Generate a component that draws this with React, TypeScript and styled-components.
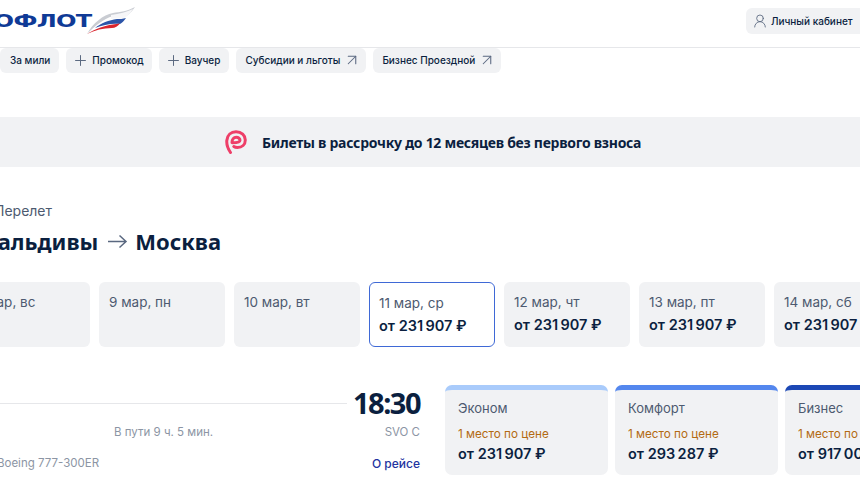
import React from 'react'
import styled, { createGlobalStyle } from 'styled-components'
import { ArrowUpRight, Plus, UserRound } from 'lucide-react'

const GlobalStyle = createGlobalStyle`
  html, body {
    margin: 0;
    padding: 0;
    background: #fff;
    font-family: Inter, "Liberation Sans", sans-serif;
    color: #0b1f3f;
  }
`

const Page = styled.div`
  width: 860px;
  height: 500px;
  overflow: hidden;
`

const Header = styled.header`
  height: 47px;
  border-bottom: 1px solid #e6e7ea;
  display: flex;
  align-items: center;
  justify-content: space-between;
`

const Logo = styled.div`
  display: flex;
  align-items: center;
  margin-left: -14px;
  margin-top: -5px;
`

const LogoText = styled.span`
  font-family: "DejaVu Sans", sans-serif;
  font-weight: 700;
  font-size: 17px;
  letter-spacing: -0.5px;
  color: #0f3a96;
  transform: scaleX(1.42);
  transform-origin: right center;
`

const Flag = styled.svg`
  width: 48px;
  height: 28px;
  margin-left: -5px;
  margin-top: -1px;
`

const CabinetButton = styled.button`
  width: 114px;
  height: 26px;
  margin-top: -5px;
  padding: 0 0 0 6px;
  display: flex;
  align-items: center;
  gap: 3px;
  border: none;
  border-radius: 6px 0 0 6px;
  background: #f1f2f4;
  font: 500 10px Inter, sans-serif;
  color: #0b1f3f;
  white-space: nowrap;
`

const ChipRow = styled.nav`
  display: flex;
  gap: 7px;
`

const Chip = styled.div<{ $left?: number; $right?: number }>`
  box-sizing: border-box;
  height: 25px;
  padding: 0 ${p => p.$right ?? 9}px 1px ${p => p.$left ?? 9}px;
  display: flex;
  align-items: center;
  gap: 3px;
  border-radius: 6px;
  background: #f1f2f4;
  font-size: 10px;
  font-weight: 500;
  color: #0b1f3f;
  white-space: nowrap;

  svg {
    color: #5a6880;
  }
`

const Banner = styled.div`
  height: 50px;
  margin-top: 44px;
  padding-left: 225px;
  display: flex;
  align-items: center;
  gap: 15px;
  background: #f1f2f4;
  font: 700 14px "Noto Sans", sans-serif;
  letter-spacing: -0.27px;
  color: #0b1f3f;
`

const Section = styled.section`
  margin-top: 35px;
  margin-left: -36px;
`

const Caption = styled.div`
  margin-left: 30px;
  font-size: 14px;
  line-height: 18px;
  color: #4d5a70;
`

const Route = styled.h1`
  height: 28px;
  margin: 7px 0 0 13px;
  display: flex;
  align-items: center;
  gap: 3px;
  font: 700 22px/28px "Noto Sans", sans-serif;
  color: #0b1f3f;
`

const RouteArrow = styled.svg`
  width: 31px;
  height: 30px;
  fill: none;
  stroke: #5a6880;
  stroke-width: 1.5;
`

const Dates = styled.div`
  margin-top: 27px;
  display: flex;
  gap: 9px;
`

const DateCard = styled.div<{ $active?: boolean }>`
  flex: 0 0 126px;
  box-sizing: border-box;
  height: 65px;
  padding: 12px 9px 0 ${p => (p.$active ? 9 : 10)}px;
  border-radius: 6px;
  background: ${p => (p.$active ? '#fff' : '#f1f2f4')};
  border: ${p => (p.$active ? '1px solid #3f69d6' : 'none')};
`

const DateLabel = styled.div`
  font-size: 13.5px;
  line-height: 16px;
  color: #4d5a70;
  white-space: nowrap;
`

const DatePrice = styled.div`
  margin-top: 6px;
  font-size: 14.5px;
  line-height: 17px;
  font-weight: 600;
  color: #0b1f3f;
  white-space: nowrap;
`

const FlightRow = styled.div`
  margin-top: 38px;
  margin-left: 36px;
  display: flex;
`

const FlightInfo = styled.div`
  width: 420px;
  flex: none;
  display: grid;
  grid-template-columns: 1fr auto;
`

const TrackLine = styled.div`
  height: 1px;
  margin: 18px 6px 0 0;
  background: #e6e7ea;
`

const ArrivalTime = styled.div`
  font: 700 29px/36px "Noto Sans", sans-serif;
  letter-spacing: -1.5px;
  color: #0b1f3f;
`

const Duration = styled.div`
  padding-left: 114px;
  font-size: 11.5px;
  line-height: 15px;
  color: #8c95a4;
`

const Airport = styled.div`
  text-align: right;
  font-size: 11.5px;
  line-height: 15px;
  color: #8c95a4;
`

const Aircraft = styled.div`
  margin-top: 12px;
  margin-left: -3px;
  font-size: 11.5px;
  line-height: 15px;
  color: #8c95a4;
`

const AboutLink = styled.a`
  margin-top: 12px;
  text-align: right;
  font-size: 12px;
  line-height: 15px;
  font-weight: 500;
  color: #2233a0;
`

const Fares = styled.div`
  margin-left: 25px;
  display: flex;
  gap: 7px;
`

const FareCard = styled.div<{ $accent: string }>`
  flex: 0 0 163px;
  box-sizing: border-box;
  height: 90px;
  padding: 10px 13px 0;
  border-top: 5px solid ${p => p.$accent};
  border-radius: 7px;
  background: #f1f2f4;
  white-space: nowrap;
`

const FareName = styled.div`
  font-size: 13px;
  line-height: 16px;
  color: #4d5a70;
`

const FareNote = styled.div`
  margin-top: 11px;
  font-size: 11.7px;
  line-height: 14px;
  color: #b36a12;
`

const FarePrice = styled.div`
  margin-top: 4px;
  font-size: 14.5px;
  line-height: 17px;
  font-weight: 600;
  color: #0b1f3f;
`

const price = 'от 231\u2009907 ₽'

const dates = [
  { label: '8 мар, вс', price: '' },
  { label: '9 мар, пн', price: '' },
  { label: '10 мар, вт', price: '' },
  { label: '11 мар, ср', price, active: true },
  { label: '12 мар, чт', price },
  { label: '13 мар, пт', price },
  { label: '14 мар, сб', price },
]

const fares = [
  { name: 'Эконом', price, accent: '#a9cbfb' },
  { name: 'Комфорт', price: 'от 293\u2009287 ₽', accent: '#5487ee' },
  { name: 'Бизнес', price: 'от 917\u2009000 ₽', accent: '#1c48b5' },
]

function App() {
  return (
    <Page>
      <GlobalStyle />
      <Header>
        <Logo>
          <LogoText>АЭРОФЛОТ</LogoText>
          <Flag viewBox="0 0 48 28">
            <path d="M0 27C6 16 16 8 26 6 33 5 41 4 48 0 44 6 40 9 36 11L26 9C16 12 8 19 0 27Z" fill="#c9ccd2" />
            <path d="M24 8C32 7 40 5 46 2 43 7 39 10 36 12 32 11 28 11 24 12Z" fill="#f6f6f8" />
            <path d="M8 21C14 16 22 13 30 12 33 12 36 12 39 11 37 14 35 16 33 17 25 16 16 18 8 21Z" fill="#2c54a8" />
            <path d="M0 27C8 22 17 18 33 16.500 31 19 28 21 25 21 16 21 8 23 0 27Z" fill="#d9252e" />
          </Flag>
        </Logo>
        <CabinetButton>
          <UserRound size={16} strokeWidth={1.3} color="#5a6880" />
          Личный кабинет
        </CabinetButton>
      </Header>
      <ChipRow>
        <Chip $left={10}>За мили</Chip>
        <Chip $left={6} $right={8}><Plus size={17} strokeWidth={1.4} />Промокод</Chip>
        <Chip $left={6}><Plus size={17} strokeWidth={1.4} />Ваучер</Chip>
        <Chip $right={5}>Субсидии и льготы<ArrowUpRight size={18} strokeWidth={1.4} /></Chip>
        <Chip $right={5}>Бизнес Проездной<ArrowUpRight size={18} strokeWidth={1.4} /></Chip>
      </ChipRow>
      <Banner>
        <svg width="22" height="24" viewBox="0 0 22 24" fill="none" stroke="#ee3f68" strokeWidth="3" strokeLinecap="round" strokeLinejoin="round">
          <path d="M5.500 22.500C2.500 18 1.500 14 1.800 10.500 2.300 5 6 1.800 11 1.800 16.500 1.800 20.300 5.500 20.300 10 20.300 14.500 17 17.500 12.500 17.500 11 17.500 9.800 17.200 8.800 16.500" />
          <path d="M7 12.500C7 9.500 8.800 7.300 11.200 7.300 13.500 7.300 15 8.800 15 10.300 15 12 13 12.800 7.500 12.800" />
        </svg>
        Билеты в рассрочку до 12 месяцев без первого взноса
      </Banner>
      <Section>
        <Caption>Перелет</Caption>
        <Route>
          Мальдивы
          <RouteArrow viewBox="0 0 31 30">
            <path d="M7 15.500H25M18.500 9.500L25 15.500 18.500 21.500" />
          </RouteArrow>
          Москва
        </Route>
        <Dates>
          {dates.map(d => (
            <DateCard key={d.label} $active={d.active}>
              <DateLabel>{d.label}</DateLabel>
              {d.price && <DatePrice>{d.price}</DatePrice>}
            </DateCard>
          ))}
        </Dates>
        <FlightRow>
          <FlightInfo>
            <TrackLine />
            <ArrivalTime>18:30</ArrivalTime>
            <Duration>В пути 9 ч. 5 мин.</Duration>
            <Airport>SVO C</Airport>
            <Aircraft>Boeing 777-300ER</Aircraft>
            <AboutLink>О рейсе</AboutLink>
          </FlightInfo>
          <Fares>
            {fares.map(f => (
              <FareCard key={f.name} $accent={f.accent}>
                <FareName>{f.name}</FareName>
                <FareNote>1 место по цене</FareNote>
                <FarePrice>{f.price}</FarePrice>
              </FareCard>
            ))}
          </Fares>
        </FlightRow>
      </Section>
    </Page>
  )
}

export default App
